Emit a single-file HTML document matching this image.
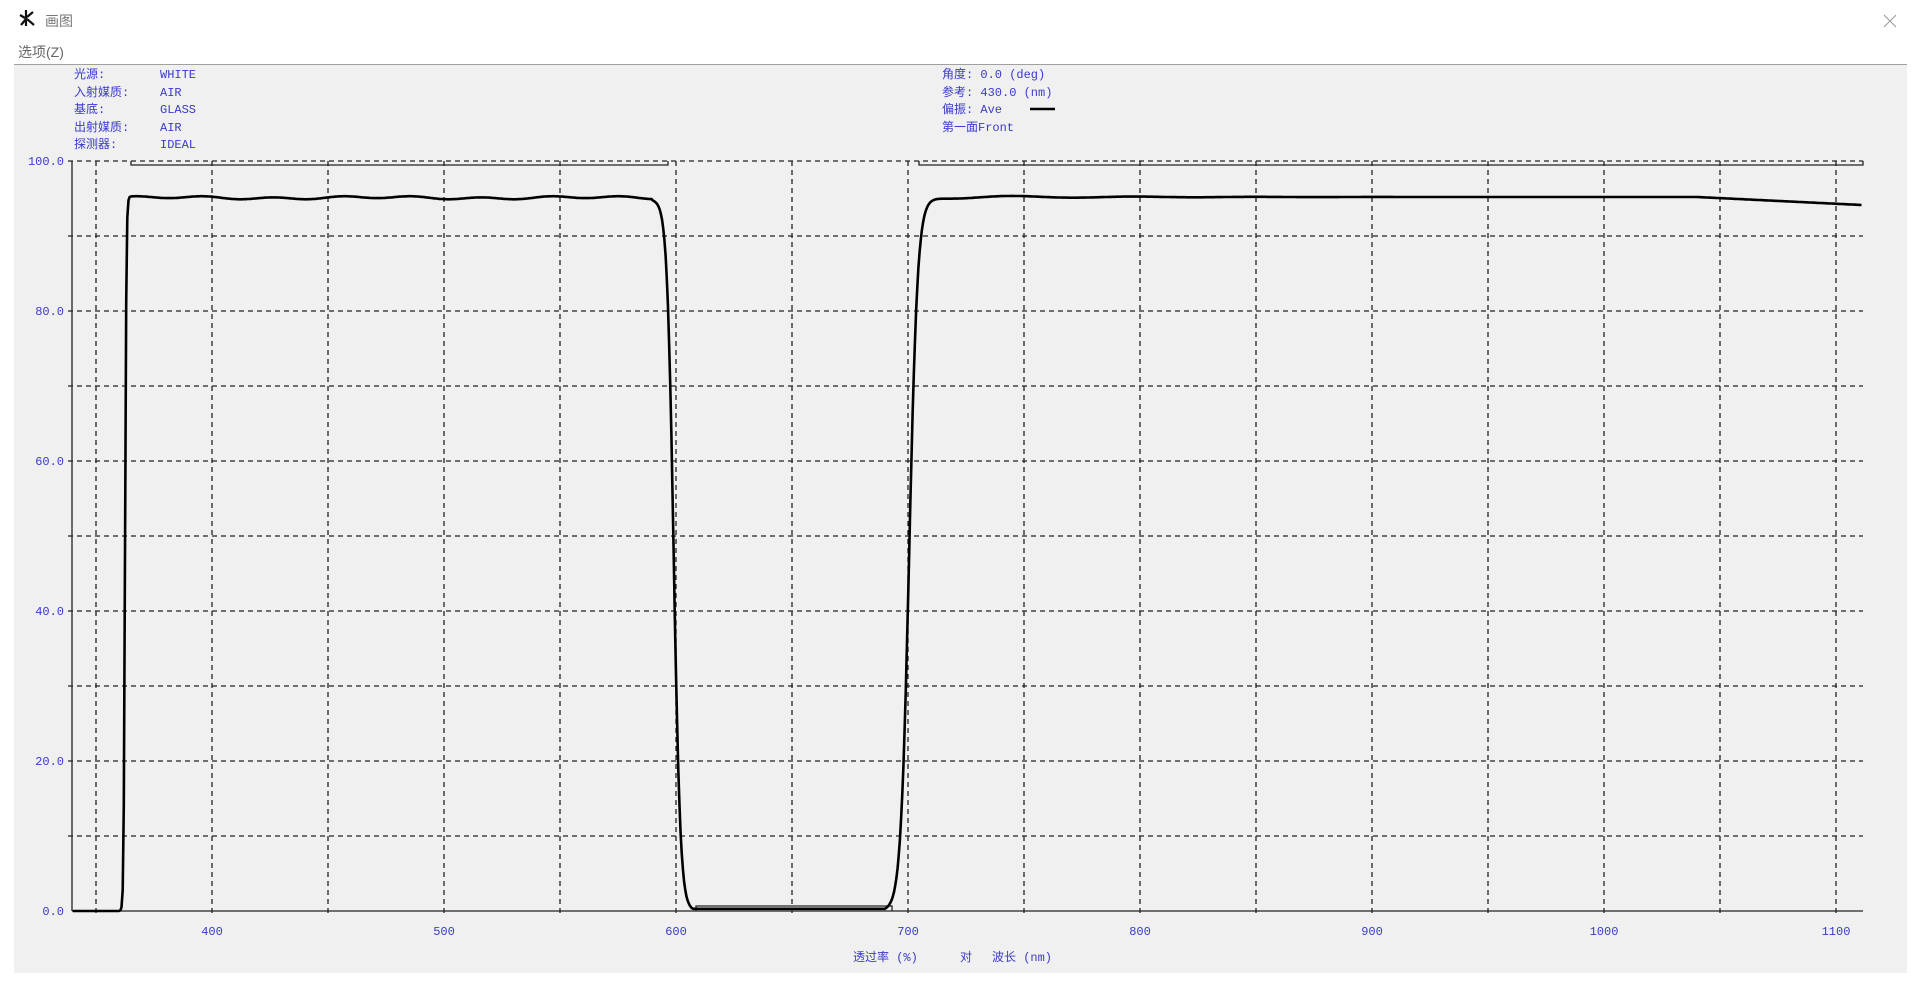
<!DOCTYPE html>
<html><head><meta charset="utf-8">
<style>
html,body{margin:0;padding:0;width:1921px;height:982px;background:#fff;overflow:hidden;font-family:"Liberation Sans","Noto Sans CJK SC",sans-serif;}
#panel{position:absolute;left:14px;top:64px;width:1893px;height:908px;background:#f0f0f0;border-top:1px solid #a0a0a0;}
.t{position:absolute;color:#777;font-size:14px;}
svg text{font-family:"Liberation Mono","Noto Sans CJK SC",monospace;fill:#3a3acc;font-size:12px;}
</style></head><body>
<svg style="position:absolute;left:18px;top:9px" width="18" height="18"><path d="M8 1V17M2 6L7 9M3 16L8 10M9 8L15 3M9 10L16 16" stroke="#111" stroke-width="2.2" fill="none"/></svg>
<div class="t" style="left:45px;top:11px;">画图</div>
<div class="t" style="left:18px;top:42px;color:#666">选项(Z)</div>
<svg style="position:absolute;left:1882px;top:13px" width="16" height="16"><path d="M2 2L14 14M14 2L2 14" stroke="#999" stroke-width="1"/></svg>
<div id="panel"></div>
<svg id="s" style="position:absolute;left:0;top:0" width="1921" height="982">
<g id="grid" stroke="#222" stroke-width="1.3" stroke-dasharray="5,4" fill="none"></g>
<g stroke="#222" stroke-width="1.3" fill="none">
<line x1="72" y1="161" x2="72" y2="911"/>
<line x1="72" y1="911" x2="1863" y2="911"/>
<path d="M131 161V165H668V161M919 161V165H1863V161"/>
<path d="M696 911V906H892V911"/>
</g>
<path id="c" stroke="#000" stroke-width="2.6" fill="none"/>
<text x="74" y="78">光源:</text><text x="160" y="78">WHITE</text>
<text x="74" y="96">入射媒质:</text><text x="160" y="96">AIR</text>
<text x="74" y="113">基底:</text><text x="160" y="113">GLASS</text>
<text x="74" y="131">出射媒质:</text><text x="160" y="131">AIR</text>
<text x="74" y="148">探测器:</text><text x="160" y="148">IDEAL</text>
<text x="942" y="78">角度: 0.0 (deg)</text>
<text x="942" y="96">参考: 430.0 (nm)</text>
<text x="942" y="113">偏振: Ave</text>
<line x1="1030" y1="109" x2="1055" y2="109" stroke="#000" stroke-width="2.5"/>
<text x="942" y="131">第一面Front</text>
<g id="yl" text-anchor="end"></g>
<g id="xl" text-anchor="middle"></g>
<text x="853" y="961" font-size="13">透过率 (%)</text><text x="960" y="961" font-size="13">对</text><text x="992" y="961" font-size="13">波长 (nm)</text>
</svg>
<script>
var X=n=>212+(n-400)*2.32, Y=v=>911-v*7.5;
var g='';
for(var n=350;n<=1100;n+=50){g+='<line x1="'+X(n)+'" y1="161" x2="'+X(n)+'" y2="915"/>';}
for(var v=10;v<=100;v+=10){g+='<line x1="68" y1="'+Y(v)+'" x2="1863" y2="'+Y(v)+'"/>';}
document.getElementById('grid').innerHTML=g;
var yl='';for(v=0;v<=100;v+=20)yl+='<text x="64" y="'+(Y(v)+4)+'">'+v.toFixed(1)+'</text>';
document.getElementById('yl').innerHTML=yl;
var xl='';for(n=400;n<=1100;n+=100)xl+='<text x="'+X(n)+'" y="935">'+n+'</text>';
document.getElementById('xl').innerHTML=xl;
function s(x){return 1/(1+Math.exp(-x));}
function T(n){
 var top=95.1+0.15*Math.sin(n*0.21)+0.1*Math.sin(n*0.07);
 if(n>700) top=95.2+0.3*Math.sin(n*0.12)*Math.exp(-(n-700)/60)-Math.max(0,(n-1040))*0.015;
 var a=s((n-362.5)*3.5), b=1-s((n-599)*0.7), c=s((n-700.5)*0.55);
 if(n<590) return top*a;
 if(n<650) return Math.max(0.3,top*b);
 return Math.max(0.3,top*c);
}
var d='';for(n=340;n<=1111;n+=0.5){d+=(d?'L':'M')+X(n).toFixed(1)+' '+Y(T(n)).toFixed(1);}
document.getElementById('c').setAttribute('d',d);
</script>
</body></html>
